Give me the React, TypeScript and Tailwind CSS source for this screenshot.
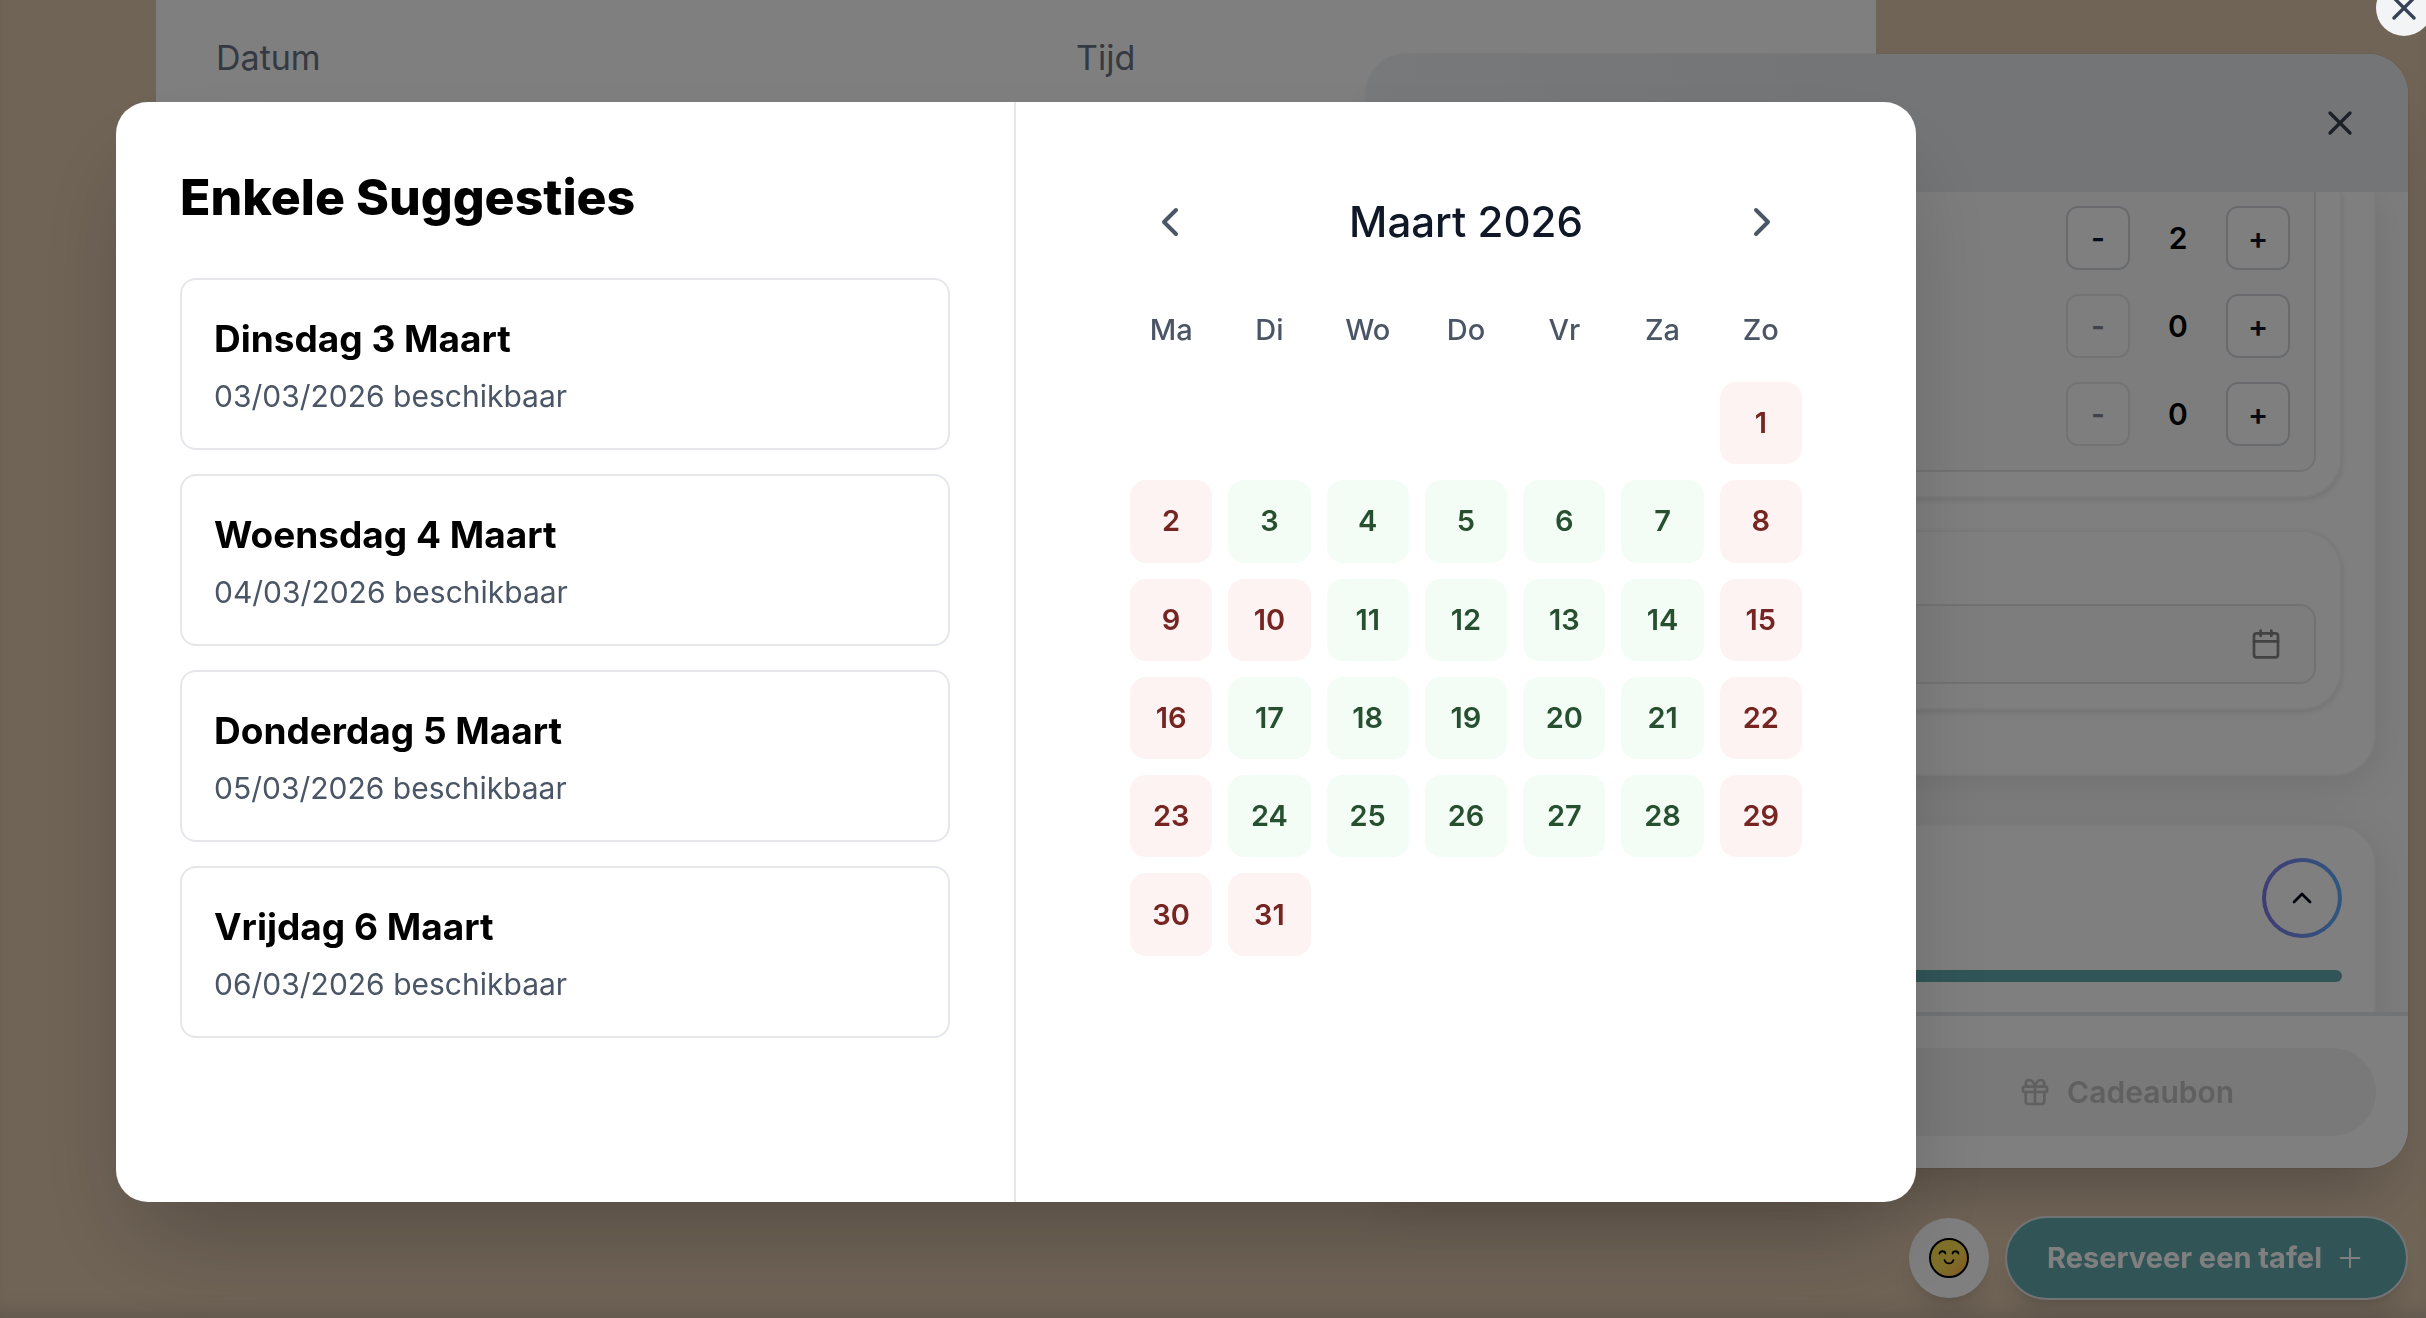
import { useState } from "react";
import {
  Calendar,
  ChevronLeft,
  ChevronRight,
  ChevronUp,
  Gift,
  Plus,
  X,
} from "lucide-react";

const suggestions = [
  { title: "Dinsdag 3 Maart", date: "03/03/2026" },
  { title: "Woensdag 4 Maart", date: "04/03/2026" },
  { title: "Donderdag 5 Maart", date: "05/03/2026" },
  { title: "Vrijdag 6 Maart", date: "06/03/2026" },
];

const weekdays = ["Ma", "Di", "Wo", "Do", "Vr", "Za", "Zo"];
const closedDays = [1, 2, 8, 9, 10, 15, 16, 22, 23, 29, 30, 31];
const leadingBlanks = 6;

function Stepper({ label, initial }: { label: string; initial: number }) {
  const [count, setCount] = useState(initial);

  return (
    <div className="flex items-center justify-end">
      <button
        type="button"
        aria-label={`${label} minder`}
        disabled={count === 0}
        onClick={() => setCount(count - 1)}
        className="size-16 rounded-xl border-2 border-gray-300 bg-white text-[30px] font-semibold text-slate-900 disabled:opacity-50"
      >
        -
      </button>
      <span className="w-24 text-center text-[30px] font-semibold text-black">
        {count}
      </span>
      <button
        type="button"
        aria-label={`${label} meer`}
        onClick={() => setCount(count + 1)}
        className="size-16 rounded-xl border-2 border-gray-300 bg-white text-[30px] font-semibold text-slate-900"
      >
        +
      </button>
    </div>
  );
}

function Smiley() {
  return (
    <svg viewBox="0 0 40 40" className="size-10" aria-hidden="true">
      <defs>
        <linearGradient id="smiley-fill" x1="0" y1="0" x2="1" y2="1">
          <stop offset="0.5" stopColor="#ffe052" />
          <stop offset="1" stopColor="#ffb048" />
        </linearGradient>
      </defs>
      <circle
        cx="20"
        cy="20"
        r="19"
        fill="url(#smiley-fill)"
        stroke="#000"
        strokeWidth="2"
      />
      <g fill="none" stroke="#000" strokeWidth="1.8" strokeLinecap="round">
        <path d="M10.5 15.5c.6-3 5.4-3 6 0" />
        <path d="M23.5 15.5c.6-3 5.4-3 6 0" />
        <path d="M15.5 22c1.4 4.6 7.6 4.6 9 0" />
      </g>
    </svg>
  );
}

function ReservationWidget() {
  return (
    <div className="fixed top-[54px] right-[18px] bottom-[18px] flex w-[1042px] flex-col gap-12">
      <div className="flex min-h-0 flex-1 flex-col overflow-hidden rounded-[40px] bg-white shadow-[0_0_2px_rgba(0,0,0,0.15),0_40px_64px_-24px_rgba(0,0,0,0.25)]">
        <header className="flex h-[138px] shrink-0 items-center justify-end bg-linear-to-r from-[#eff2f5] via-[#e7eaed] to-[#e9eaed] px-12">
          <button type="button" aria-label="Sluiten" className="text-gray-700">
            <X size={40} />
          </button>
        </header>

        <div className="flex min-h-0 flex-1 flex-col gap-12 overflow-hidden bg-[#fafafa] px-8">
          <section className="shrink-0 rounded-b-[40px] border-2 border-t-0 border-neutral-100 bg-white px-8 pb-16 shadow-[0_8px_40px_rgba(0,0,0,0.1)]">
            <div className="rounded-b-[40px] border-2 border-t-0 border-neutral-100 bg-white px-6 pb-6 shadow-[0_2px_6px_rgba(0,0,0,0.12)]">
              <div className="flex flex-col gap-6 rounded-b-2xl border-2 border-t-0 border-neutral-200 bg-neutral-50 px-6 pt-[14px] pb-6">
                <Stepper label="Volwassenen" initial={2} />
                <Stepper label="Kinderen" initial={0} />
                <Stepper label="Baby's" initial={0} />
              </div>
            </div>
            <div className="mt-8 rounded-[40px] border-2 border-neutral-100 bg-white px-6 pt-[72px] pb-6 shadow-[0_2px_6px_rgba(0,0,0,0.12)]">
              <button
                type="button"
                aria-label="Kies een datum"
                className="flex h-20 w-full items-center justify-end rounded-2xl border-2 border-neutral-200 bg-neutral-50 px-8 text-[#858585]"
              >
                <Calendar size={32} />
              </button>
            </div>
          </section>

          <section className="h-60 shrink-0 rounded-t-[40px] border-2 border-neutral-100 bg-white p-8 shadow-[0_8px_40px_rgba(0,0,0,0.1)]">
            <div className="flex justify-end">
              <button
                type="button"
                aria-label="Inklappen"
                className="size-20 rounded-full bg-linear-to-r from-[#8078e8] to-[#5caeff] p-1"
              >
                <span className="flex size-full items-center justify-center rounded-full bg-white text-slate-950">
                  <ChevronUp size={32} />
                </span>
              </button>
            </div>
            <div className="mt-8 h-3 rounded-full bg-[#62aaae]" />
          </section>
        </div>

        <footer className="flex shrink-0 justify-end border-t-4 border-gray-200 bg-white p-8">
          <button
            type="button"
            disabled
            className="flex h-[88px] w-[51%] items-center justify-center gap-4 rounded-full bg-[#f2f2f2] text-[30px] font-semibold text-[#c0c0c0]"
          >
            <Gift size={32} />
            Cadeaubon
          </button>
        </footer>
      </div>

      <div className="flex items-center justify-end gap-4">
        <button
          type="button"
          aria-label="Feedback"
          className="flex size-20 items-center justify-center rounded-full bg-white shadow-xl"
        >
          <Smiley />
        </button>
        <button
          type="button"
          className="flex h-[84px] items-center gap-3 rounded-full border-2 border-gray-200 bg-[#62aaae] px-10 text-[29px] font-bold text-white shadow-xl"
        >
          Reserveer een tafel
          <Plus size={32} strokeWidth={1.5} />
        </button>
      </div>
    </div>
  );
}

function Suggestions() {
  return (
    <section className="border-r-2 border-gray-200 p-16">
      <h2 className="mb-12 text-[50px] leading-[62px] font-extrabold text-black">
        Enkele Suggesties
      </h2>
      <div className="flex flex-col gap-6 pt-[2px]">
        {suggestions.map((item) => (
          <button
            key={item.date}
            type="button"
            className="rounded-2xl border-2 border-gray-200 p-8 text-left hover:bg-gray-50"
          >
            <span className="block text-[37px] leading-[54px] font-bold text-black">
              {item.title}
            </span>
            <span className="mt-[10px] block text-[30px] leading-10 text-gray-600">
              {item.date} beschikbaar
            </span>
          </button>
        ))}
      </div>
    </section>
  );
}

function MonthCalendar() {
  const days = Array.from({ length: 31 }, (_, i) => i + 1);

  return (
    <section className="px-16 py-20">
      <div className="mx-auto max-w-2xl">
        <div className="mb-8 flex items-center justify-between">
          <button
            type="button"
            aria-label="Vorige maand"
            className="rounded-full p-4 text-gray-600"
          >
            <ChevronLeft size={48} />
          </button>
          <h3 className="text-[42px] leading-14 font-medium text-gray-900">
            Maart 2026
          </h3>
          <button
            type="button"
            aria-label="Volgende maand"
            className="rounded-full p-4 text-gray-600"
          >
            <ChevronRight size={48} />
          </button>
        </div>

        <div className="grid grid-cols-7 gap-4">
          {weekdays.map((day) => (
            <div
              key={day}
              className="py-4 text-center text-[29px] leading-10 font-medium text-gray-600"
            >
              {day}
            </div>
          ))}
          {Array.from({ length: leadingBlanks }, (_, i) => (
            <div key={`blank-${i}`} />
          ))}
          {days.map((day) => {
            const closed = closedDays.includes(day);
            return (
              <button
                key={day}
                type="button"
                disabled={closed}
                className={`flex aspect-square items-center justify-center rounded-2xl text-[29px] leading-10 font-semibold ${
                  closed
                    ? "bg-[#fdf3f2] text-[#752522]"
                    : "bg-[#f3fdf6] text-[#275031]"
                }`}
              >
                {day}
              </button>
            );
          })}
        </div>
      </div>
    </section>
  );
}

export default function App() {
  return (
    <div className="relative min-h-screen overflow-hidden bg-[#e0c8ae] font-['Inter',sans-serif] shadow-[inset_0_-16px_24px_-16px_rgba(0,0,0,0.2)]">
      <main className="mr-[550px] ml-[156px] grid h-[900px] grid-cols-2 gap-x-[120px] bg-white px-[60px] pt-[34px] text-[34px] leading-12 text-gray-500">
        <div>Datum</div>
        <div>Tijd</div>
      </main>

      <ReservationWidget />

      <div className="fixed inset-0 flex overflow-hidden bg-black/50 pt-[102px] pr-[510px] pb-[116px] pl-[116px]">
        <div
          role="dialog"
          aria-modal="true"
          aria-label="Enkele Suggesties"
          className="grid flex-1 grid-cols-2 rounded-4xl bg-white shadow-[0_50px_100px_-24px_rgba(0,0,0,0.25)]"
        >
          <Suggestions />
          <MonthCalendar />
        </div>
        <button
          type="button"
          aria-label="Venster sluiten"
          className="absolute -top-5 -right-1.5 flex size-14 items-center justify-center rounded-full bg-gray-100 text-gray-700"
        >
          <X size={40} />
        </button>
      </div>
    </div>
  );
}
